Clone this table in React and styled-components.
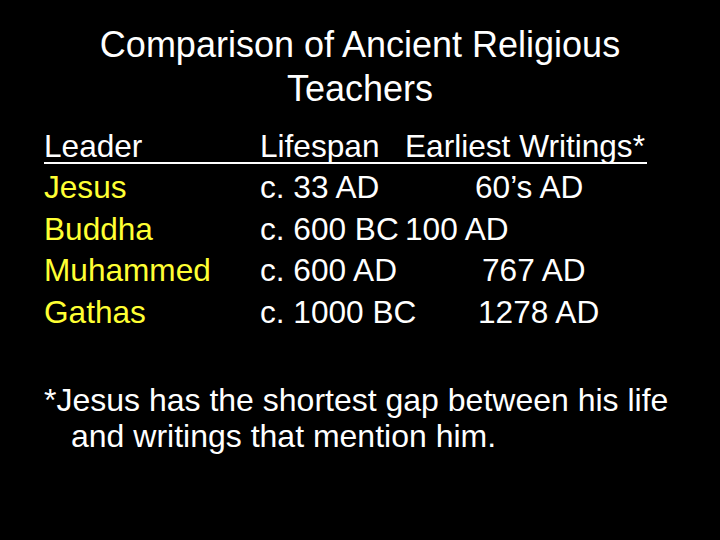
import React from "react";
import styled, { createGlobalStyle } from "styled-components";

const Global = createGlobalStyle`
  html, body { margin: 0; padding: 0; background: #000; }
  body { font-family: "Liberation Sans", Arial, sans-serif; }
`;

const Slide = styled.div`
  width: 720px;
  height: 540px;
  background: #000;
  color: #fff;
  overflow: hidden;
  box-sizing: border-box;
  padding-top: 23px;
`;

const Title = styled.h1`
  margin: 0;
  font-weight: normal;
  font-size: 36px;
  line-height: 44px;
  text-align: center;
`;

const Table = styled.div`
  margin: 20px 0 0 44px;
`;

const HeaderRow = styled.div`
  display: grid;
  grid-template-columns: 216px 145px auto;
  width: 603px;
  font-size: 31.6px;
  line-height: 31px;
  border-bottom: 2px solid #fff;
  margin-bottom: 3px;
  white-space: nowrap;
`;

const Row = styled.div`
  display: grid;
  grid-template-columns: 216px ${(p) => p.$span}px auto;
  font-size: 31.6px;
  line-height: 41.5px;
  white-space: nowrap;
`;

const Leader = styled.span`
  color: #ffff33;
`;

const Cell = styled.span``;

const Footnote = styled.p`
  margin: 49px 0 0 44px;
  padding-left: 27px;
  text-indent: -27px;
  font-size: 32px;
  line-height: 36px;
  white-space: nowrap;
`;

const rows = [
  { leader: "Jesus", life: "c. 33 AD", writ: "60\u2019s AD", span: 215 },
  { leader: "Buddha", life: "c. 600 BC", writ: "100 AD", span: 145 },
  { leader: "Muhammed", life: "c. 600 AD", writ: "767 AD", span: 222 },
  { leader: "Gathas", life: "c. 1000 BC", writ: "1278 AD", span: 218 },
];

export default function App() {
  return (
    <>
      <Global />
      <Slide>
        <Title>
          Comparison of Ancient Religious
          <br />
          Teachers
        </Title>
        <Table>
          <HeaderRow>
            <Cell>Leader</Cell>
            <Cell>Lifespan</Cell>
            <Cell>Earliest Writings*</Cell>
          </HeaderRow>
          {rows.map((r) => (
            <Row key={r.leader} $span={r.span}>
              <Leader>{r.leader}</Leader>
              <Cell>{r.life}</Cell>
              <Cell>{r.writ}</Cell>
            </Row>
          ))}
        </Table>
        <Footnote>
          *Jesus has the shortest gap between his life
          <br />
          and writings that mention him.
        </Footnote>
      </Slide>
    </>
  );
}
